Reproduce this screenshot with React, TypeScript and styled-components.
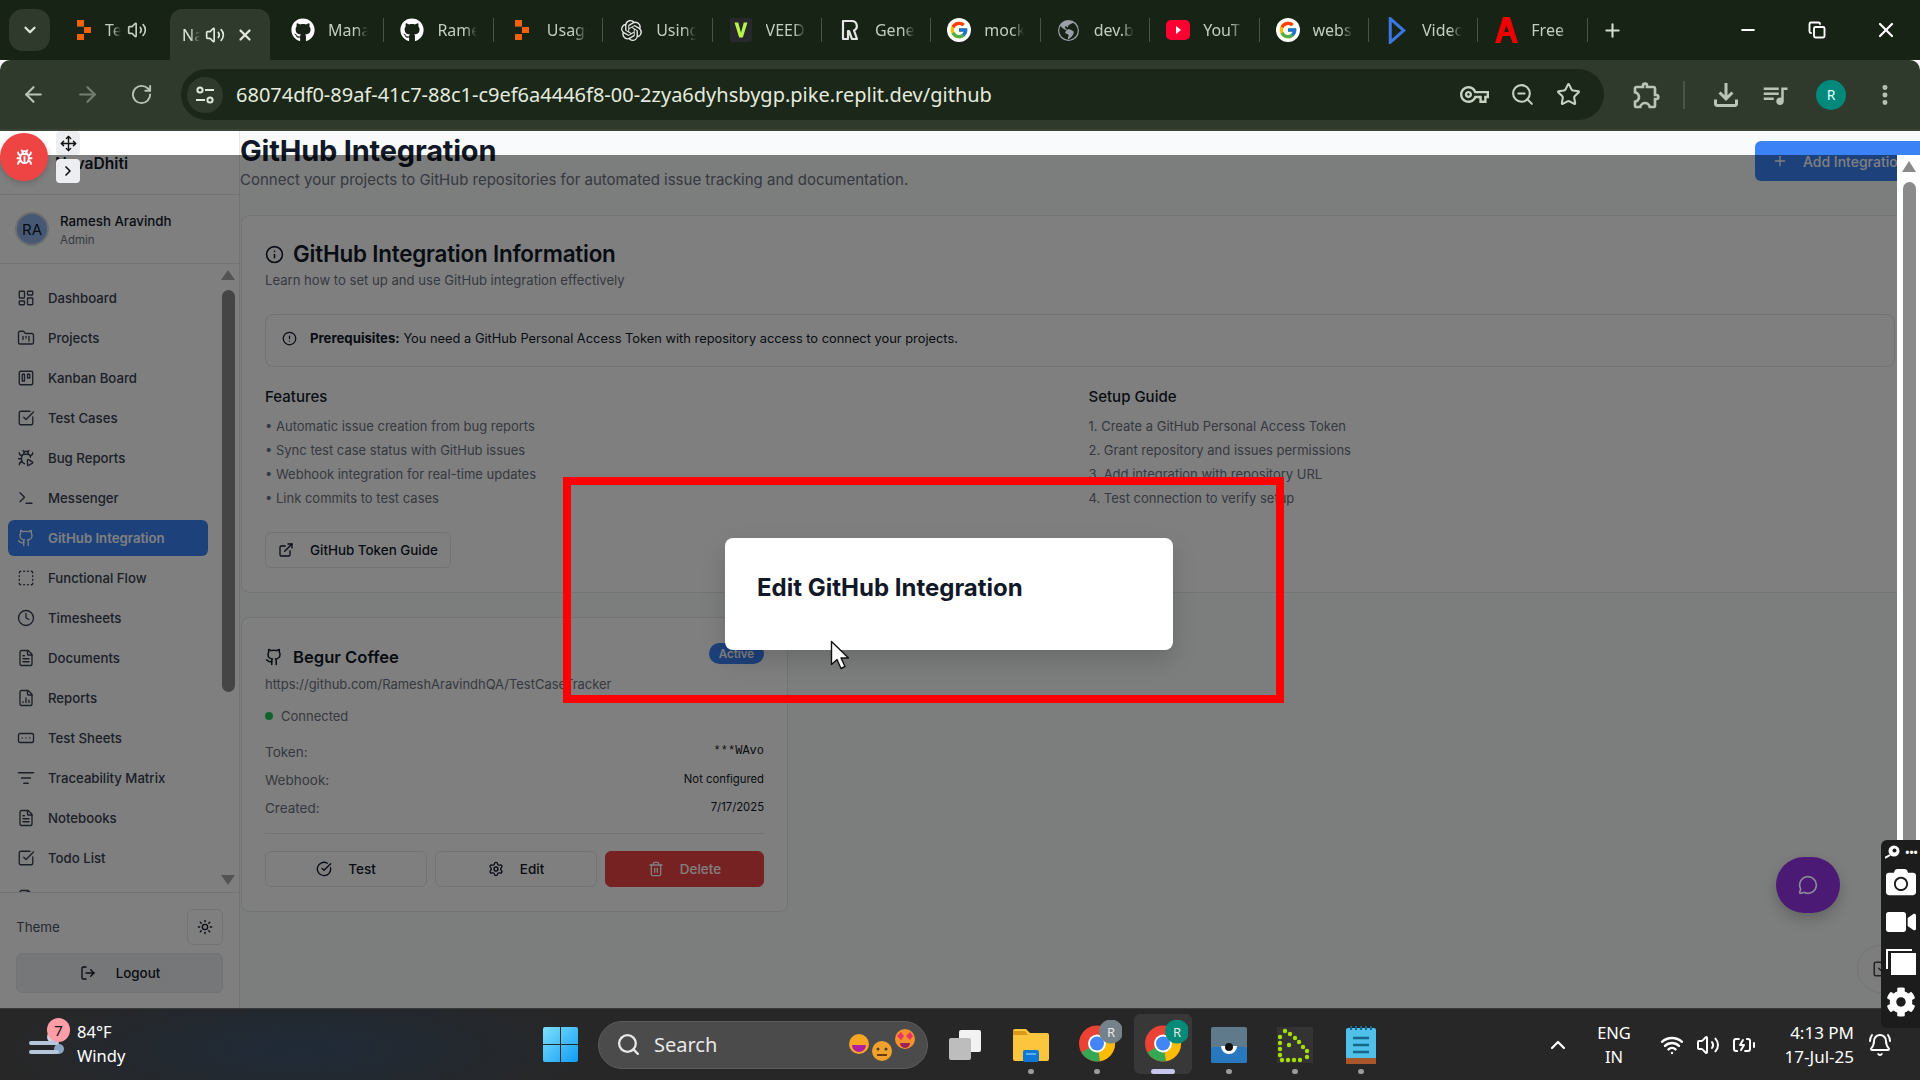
import React from "react";
import styled, { createGlobalStyle } from "styled-components";
import {
  ArrowLeft, ArrowRight, RotateCw, ZoomOut, Star, MoreVertical,
  Volume2, X, Plus, Minus, ChevronDown, ChevronRight, ChevronUp, LayoutDashboard, FolderKanban,
  Trello, SquareCheckBig, BugPlay, Terminal, Github, SquareDashed, Clock, FileText, FileChartColumn,
  RectangleEllipsis, ListFilter, Info, CircleAlert, ExternalLink, CircleCheckBig, Settings, Trash2,
  MessageCircle, Sun, LogOut, Move, Bug, Search, Wifi, BatteryCharging, BellRing, Copy,
} from "lucide-react";
import { FaGithub, FaCamera, FaVideo, FaCog } from "react-icons/fa";
import { FcGoogle } from "react-icons/fc";
import { SiOpenai } from "react-icons/si";
import { BsGlobeAmericas } from "react-icons/bs";
import { MdOutlineVpnKey, MdOutlineExtension, MdOutlineFileDownload, MdOutlineQueueMusic } from "react-icons/md";

const GlobalStyle = createGlobalStyle`
  html, body { margin: 0; padding: 0; background: #fff; }
  * { box-sizing: border-box; }
  #root { width: 1920px; height: 1080px; }
`;

const UI = `"Noto Sans", "Open Sans", sans-serif`;
const APP = `Inter, "Liberation Sans", sans-serif`;

const Screen = styled.div`
  position: relative; width: 1920px; height: 1080px; overflow: hidden;
  display: flex; flex-direction: column; font-family: ${APP};
`;

/* ---------- browser chrome ---------- */
const TabStrip = styled.div`
  height: 60px; background: #172315; display: flex; align-items: flex-start; padding-left: 9px; flex: none;
`;
const TabSearch = styled.div`
  width: 41px; height: 42px; margin-top: 9px; border-radius: 14px; background: #2f3a2d; color: #dfe6da;
  display: flex; align-items: center; justify-content: center; flex: none;
`;
const MutedTab = styled.div`
  width: 120px; height: 60px; padding-left: 27px; display: flex; align-items: center; flex: none; color: #c3cdbf;
  font: 400 16px ${UI};
`;
const ActiveTab = styled.div`
  width: 100px; height: 51px; margin-top: 9px; background: #2f3a2d; border-radius: 12px 12px 0 0;
  display: flex; align-items: center; padding: 0 0 0 12px; color: #e1e8dc; font: 400 16px ${UI}; flex: none;
  margin-right: 5px;
`;
const ShortLabel = styled.span<{ $w: number }>`
  width: ${p => p.$w}px; overflow: hidden; white-space: nowrap; flex: none;
  -webkit-mask-image: linear-gradient(90deg, #000 45%, transparent);
  mask-image: linear-gradient(90deg, #000 45%, transparent);
`;
const Tab = styled.div`
  width: 109.4px; height: 60px; display: flex; align-items: center; padding-left: 16px; position: relative; flex: none;
  color: #c3cdbf; font: 400 16px ${UI};
  &::after { content: ""; position: absolute; right: 0; top: 18px; width: 1px; height: 24px; background: #4a5548; }
`;
const TabIconSlot = styled.span`
  width: 24px; height: 24px; display: flex; align-items: center; justify-content: center; flex: none; margin-right: 13px;
`;
const TabLabel = styled.span`
  width: 40px; overflow: hidden; white-space: nowrap;
  -webkit-mask-image: linear-gradient(90deg, #000 70%, transparent);
  mask-image: linear-gradient(90deg, #000 70%, transparent);
`;
const NewTab = styled.div`
  width: 50px; height: 60px; display: flex; align-items: center; justify-content: center; color: #d5ddd0; flex: none;
`;
const WindowControls = styled.div`
  margin-left: auto; display: flex; height: 60px; color: #fff; flex: none;
`;
const WindowButton = styled.div`
  width: 69px; height: 60px; display: flex; align-items: center; justify-content: center;
`;
const Toolbar = styled.div`
  height: 71px; background: #2f3a2d; border-bottom: 2px solid #3b4639; border-radius: 10px 10px 0 0; display: flex;
  align-items: center; flex: none; padding-left: 0; color: #b9c5b4; position: relative;
`;
const NavIcon = styled.div<{ $dim?: boolean }>`
  width: 54px; height: 50px; display: flex; align-items: center; justify-content: center; flex: none;
  opacity: ${p => (p.$dim ? 0.5 : 1)};
`;
const NavCluster = styled.div`
  display: flex; width: 181px; padding-left: 6px; flex: none;
`;
const Omnibox = styled.div`
  width: 1423px; height: 51px; border-radius: 26px; background: #1b2718; display: flex; align-items: center;
  padding: 0 23px 0 6px; flex: none;
`;
const SiteInfo = styled.div`
  width: 36px; height: 36px; border-radius: 50%; background: #2f3a2d; display: flex; align-items: center;
  justify-content: center; color: #dfe6da; flex: none;
`;
const Url = styled.div`
  margin-left: 13px; font: 400 20px ${UI}; color: #e4ebdf; white-space: nowrap; flex: 1;
`;
const OmniIcons = styled.div`
  display: flex; gap: 21px; align-items: center; color: #c6d1c1; padding-right: 0;
`;
const ToolCluster = styled.div`
  display: flex; align-items: center; flex: 1; padding-left: 27px; position: relative;
`;
const ToolDivider = styled.div`
  width: 2px; height: 28px; background: #4a5548; margin: 0 23px 0 20px;
`;
const Avatar = styled.div`
  width: 30px; height: 30px; border-radius: 50%; background: #00897b; color: #dff; display: flex; align-items: center;
  justify-content: center; font: 400 14px ${UI}; margin-left: 26px;
`;

/* ---------- page ---------- */
const Page = styled.div`
  height: 877px; display: flex; position: relative; flex: none; overflow: hidden; background: #f9fafb;
`;
const Sidebar = styled.aside`
  width: 240px; flex: none; background: #fff; border-right: 1px solid #e5e7eb; display: flex; flex-direction: column;
`;
const Brand = styled.div`
  height: 64px; flex: none; border-bottom: 1px solid #e5e7eb; display: flex; align-items: flex-start; padding: 22px 0 0 17px;
  gap: 10px; font: 600 15.6px/22px ${APP}; color: #111827;
`;
const BrandMark = styled.div`
  width: 28px; height: 24px; margin-top: 2px; border-radius: 6px; color: #6b7280; flex: none; text-align: right;
  font: 400 9px/24px ${APP};
`;
const UserBlock = styled.div`
  height: 69px; flex: none; border-bottom: 1px solid #e5e7eb; display: flex; align-items: center; padding: 0 15px; gap: 11px;
`;
const UserAvatar = styled.div`
  width: 34px; height: 34px; border-radius: 50%; background: #8fb0ea; border: 2px solid #d5dae2; display: flex;
  align-items: center; justify-content: center; color: #111827; font: 400 15px ${APP}; flex: none;
`;
const UserText = styled.div`
  display: flex; flex-direction: column; gap: 2px; padding-top: 2px;
`;
const UserName = styled.div`
  font: 500 13.3px/18px ${APP}; color: #111827;
`;
const UserRole = styled.div`
  font: 400 11.5px/16px ${APP}; color: #6b7280;
`;
const NavArea = styled.div`
  flex: 1; display: flex; min-height: 0;
`;
const NavList = styled.nav`
  width: 221px; padding: 16px 13px 0 8px; display: flex; flex-direction: column; gap: 4px; overflow: hidden; flex: none;
`;
const NavItem = styled.div<{ $active?: boolean }>`
  height: 36px; flex: none; border-radius: 6px; display: flex; align-items: center; gap: 13px; padding-left: 9px;
  font: ${p => (p.$active ? 600 : 500)} 13.2px ${APP};
  background: ${p => (p.$active ? "#3b82f6" : "transparent")};
  color: ${p => (p.$active ? "#fff" : "#374151")};
`;
const Rail = styled.div`
  width: 14px; display: flex; flex-direction: column; align-items: center; padding-top: 6px; flex: none;
`;
const RailArrow = styled.div<{ $down?: boolean }>`
  width: 0; height: 0; border-left: 7px solid transparent; border-right: 7px solid transparent;
  ${p => (p.$down ? "border-top: 10px solid #a8a8a8;" : "border-bottom: 10px solid #a8a8a8;")}
`;
const RailThumb = styled.div`
  width: 13px; height: 402px; margin-top: 10px; border-radius: 7px; background: #8a8a8a;
`;
const RailSpacer = styled.div`
  flex: 1;
`;
const RailFoot = styled.span`
  height: 7px; flex: none;
`;
const SideFooter = styled.div`
  height: 116px; flex: none; border-top: 1px solid #e5e7eb; padding: 16px 16px 0;
`;
const ThemeRow = styled.div`
  height: 36px; display: flex; align-items: center; justify-content: space-between; font: 400 13.4px ${APP}; color: #4b5563;
`;
const ThemeButton = styled.div`
  width: 36px; height: 36px; border: 1px solid #e5e7eb; border-radius: 6px; display: flex; align-items: center;
  justify-content: center; color: #111827;
`;
const LogoutButton = styled.div`
  height: 40px; margin-top: 8px; border-radius: 6px; border: 1px solid #e5e7eb; background: #eceef1;
  display: flex; align-items: center; justify-content: center; gap: 20px; font: 500 13.4px ${APP}; color: #111827;
  padding-left: 1px;
`;
const Main = styled.main`
  flex: 1; min-width: 0; overflow: hidden; display: flex; flex-direction: column;
`;
const PageHead = styled.div`
  height: 84px; flex: none; display: flex; justify-content: space-between; align-items: flex-start;
`;
const PageTitle = styled.h1`
  margin: 2px 0 0; font: 700 29px/36px ${APP}; color: #111827; letter-spacing: -0.2px;
`;
const PageSub = styled.p`
  margin: -1px 0 0; font: 400 15px/24px ${APP}; color: #6b7280;
`;
const AddButton = styled.div`
  width: 165px; height: 40px; margin-top: 10px; border-radius: 6px 0 0 6px; background: #3b82f6; color: #fff; flex: none;
  display: flex; align-items: center; gap: 15px; padding-left: 17px; font: 500 14px ${APP}; white-space: nowrap; overflow: hidden;
`;
const InfoCard = styled.section`
  margin-left: 1px; height: 378px; flex: none; background: #fff; border: 1px solid #e5e7eb; border-radius: 8px;
  padding: 22px 24px 0 23px;
`;
const CardTitle = styled.h2`
  margin: 0; display: flex; align-items: center; gap: 9px; font: 600 22.4px/32px ${APP}; color: #111827; letter-spacing: -0.2px;
`;
const CardDesc = styled.p`
  margin: 0; font: 400 13.1px/20px ${APP}; color: #6b7280;
`;
const AlertBox = styled.div`
  margin-top: 24px; height: 53px; border: 1px solid #e5e7eb; border-radius: 8px; display: flex; align-items: flex-start;
  gap: 13px; padding: 13px 16px 0; font: 400 12.85px/20px ${APP}; color: #111827;
`;
const AlertIcon = styled.span`
  display: flex; margin-top: 3px; flex: none;
`;
const AlertStrong = styled.b`
  font-size: 13.2px;
`;
const Columns = styled.div`
  margin-top: 18px; display: grid; grid-template-columns: 1fr 1fr; gap: 17px;
`;
const ColumnTitle = styled.h3`
  margin: 0; font: 500 15px/24px ${APP}; color: #111827;
`;
const ColumnList = styled.ul`
  margin: 5px 0 0; padding: 0; list-style: none; font: 400 13px/24px ${APP}; color: #6b7280;
`;
const OutlineButton = styled.div`
  margin-top: 22px; width: 186px; height: 36px; border: 1px solid #e5e7eb; border-radius: 6px; display: flex; align-items: center;
  gap: 16px; padding-left: 12px; font: 500 13.4px ${APP}; color: #111827; background: #fff;
`;
const RepoCard = styled.section`
  margin: 24px 0 0 1px; width: 547px; height: 295px; flex: none; background: #fff; border: 1px solid #e5e7eb; border-radius: 8px;
  padding: 25px 23px 0;
`;
const RepoTop = styled.div`
  display: flex; justify-content: space-between; align-items: flex-start;
`;
const RepoTitle = styled.h3`
  margin: 0; display: flex; align-items: center; gap: 10px; font: 600 16.6px/28px ${APP}; color: #111827;
`;
const Badge = styled.span`
  width: 55px; height: 21px; border-radius: 11px; background: #3b82f6; color: #fff; display: flex;
  align-items: center; justify-content: center; font: 600 11.5px ${APP};
`;
const RepoUrl = styled.div`
  margin-top: 3px; font: 400 12.96px/20px ${APP}; color: #6b7280;
`;
const StatusRow = styled.div`
  margin-top: 12px; display: flex; align-items: center; gap: 8px; font: 400 13px/20px ${APP}; color: #6b7280;
`;
const StatusDot = styled.span`
  width: 8px; height: 8px; border-radius: 50%; background: #22c55e;
`;
const Meta = styled.dl`
  margin: 16px 0 0; display: flex; flex-direction: column; gap: 8px;
`;
const MetaRow = styled.div`
  display: flex; justify-content: space-between; height: 20px;
`;
const MetaKey = styled.dt`
  font: 400 13.5px/20px ${APP}; color: #6b7280;
`;
const MetaValue = styled.dd<{ $mono?: boolean }>`
  margin: 0; color: #111827; font: 400 ${p => (p.$mono ? "12px/18px 'Liberation Mono', monospace" : `11.3px/18px ${APP}`)};
`;
const RepoDivider = styled.div`
  height: 1px; background: #e5e7eb; margin-top: 15px;
`;
const RepoActions = styled.div`
  margin-top: 17px; display: grid; grid-template-columns: 162px 162px 159px; gap: 8px;
`;
const ActionButton = styled.div<{ $danger?: boolean }>`
  height: 36px; border-radius: 6px; display: flex; align-items: center; justify-content: center; gap: 16px;
  font: 500 13.5px ${APP}; border: 1px solid ${p => (p.$danger ? "#ef4444" : "#e5e7eb")};
  background: ${p => (p.$danger ? "#ef4444" : "#fff")};
  color: ${p => (p.$danger ? "#fff" : "#111827")};
`;

/* ---------- over content ---------- */
const Backdrop = styled.div`
  position: absolute; left: 0; right: 0; top: 24px; bottom: 0; background: rgba(0, 0, 0, 0.5);
`;
const PageTrack = styled.div`
  position: absolute; right: 0; top: 24px; bottom: 0; width: 23px; background: #fff; display: flex; flex-direction: column;
  align-items: center; padding: 6px 0 0 1px;
`;
const TrackArrow = styled.div`
  width: 0; height: 0; border-left: 7px solid transparent; border-right: 7px solid transparent; border-bottom: 11px solid #8a8a8a;
`;
const TrackThumb = styled.div`
  width: 13px; flex: 1; margin-top: 10px; border-radius: 7px 7px 0 0; background: #8a8a8a;
`;
const BugFab = styled.div`
  position: absolute; left: 0; top: 133px; width: 48px; height: 48px; border-radius: 50%; background: #ef4444; color: #fff;
  display: flex; align-items: center; justify-content: center; box-shadow: 0 2px 6px rgba(0,0,0,.2);
`;
const SmallFloat = styled.div<{ $top: number }>`
  position: absolute; left: 56px; top: ${p => p.$top}px; width: 24px; height: 24px; border-radius: 4px; background: #eceef2; color: #111;
  display: flex; align-items: center; justify-content: center;
`;
const ChatFab = styled.div`
  position: absolute; left: 1776px; top: 857px; width: 64px; height: 56px; border-radius: 28px; background: #4a1a75; color: #8f8a99;
  display: flex; align-items: center; justify-content: center; box-shadow: 0 6px 14px rgba(0,0,0,.2);
`;
const GhostFab = styled.div`
  position: absolute; left: 1857px; top: 945px; width: 48px; height: 48px; border-radius: 50%; background: #7d7d7d; border: 1px solid #757575;
  display: flex; align-items: center; padding-left: 14px; color: #222;
`;
const CaptureBar = styled.div`
  position: absolute; left: 1881px; top: 840px; width: 39px; height: 188px; border-radius: 6px 0 0 6px; background: #1c1c1c; color: #fff;
  display: flex; flex-direction: column; align-items: center; padding-top: 5px; gap: 10px;
`;
const CaptureTop = styled.div`
  display: flex; align-items: center; gap: 4px; height: 14px; padding-left: 2px; font: 700 11px/10px ${UI}; margin-bottom: -2px;
`;
const Modal = styled.div`
  position: absolute; left: 725px; top: 538px; width: 448px; height: 112px; background: #fff; border-radius: 8px;
  padding: 32px 32px 0; box-shadow: 0 10px 25px rgba(0,0,0,.15);
`;
const ModalTitle = styled.h2`
  margin: 0; font: 700 24px/36px ${APP}; color: #111827; white-space: nowrap;
`;
const Annotation = styled.div`
  position: absolute; left: 563px; top: 477px; width: 721px; height: 226px; border: 8px solid #f00;
`;
const Pointer = styled.svg`
  position: absolute; left: 830px; top: 640px;
`;

/* ---------- taskbar ---------- */
const Taskbar = styled.footer`
  height: 72px; flex: none; display: flex; align-items: center; position: relative; border-top: 1px solid #3a3a3a;
  background: radial-gradient(ellipse 300px 70px at 300px 40px, #1f2a38, transparent), #272727;
  color: #fff; font-family: ${UI};
`;
const Weather = styled.div`
  width: 543px; height: 100%; display: flex; align-items: center; padding-left: 29px; position: relative; flex: none;
`;
const WeatherBadge = styled.span`
  position: absolute; left: 47px; top: 9px; width: 23px; height: 24px; border-radius: 50%; background: #ff9ea6; color: #111;
  display: flex; align-items: center; justify-content: center; font: 400 15px ${UI};
`;
const WeatherText = styled.div`
  margin: -2px 0 0 12px; display: flex; flex-direction: column; gap: 2px; font: 400 16.5px/22px ${UI};
`;
const WindowsMark = styled.svg`
  flex: none;
`;
const SearchPill = styled.div`
  margin-left: 20px; width: 330px; height: 48px; border-radius: 24px; background: #4b4b4b; border: 1px solid #5c5c5c; display: flex; align-items: center;
  padding-left: 17px; gap: 13px; font: 400 20px ${UI}; color: #e8e8e8; flex: none; position: relative;
`;
const EmojiStack = styled.svg`
  position: absolute; right: 10px; top: 6px;
`;
const TaskSlots = styled.div`
  margin-left: 4px; display: flex; flex: none; height: 100%;
`;
const TaskSlot = styled.div<{ $active?: boolean }>`
  width: 66px; height: 100%; display: flex; align-items: center; justify-content: center; position: relative;
  &::before {
    content: ""; position: absolute; left: 4px; right: 4px; top: 5px; bottom: 6px; border-radius: 6px;
    background: ${p => (p.$active ? "#383838" : "transparent")};
  }
  & > svg { position: relative; }
`;
const RunDot = styled.span<{ $active?: boolean }>`
  position: absolute; bottom: 6px; left: 50%; transform: translateX(-50%); height: 5px; border-radius: 3px;
  width: ${p => (p.$active ? 24 : 6)}px; background: ${p => (p.$active ? "#c9c6ee" : "#9b9b9b")};
`;
const Tray = styled.div`
  flex: 1; display: flex; align-items: center; height: 100%; padding-left: 152px;
`;
const Lang = styled.div`
  width: 46px; margin-left: 21px; text-align: center; font: 400 16.5px/24px ${UI};
`;
const TrayIcons = styled.div`
  margin-left: 23px; display: flex; gap: 12px; align-items: center; width: 100px;
`;
const Clockline = styled.div`
  width: 94px; margin-left: 0; text-align: right; font: 400 17px/24px ${UI};
`;
const BellSlot = styled.div`
  margin-left: 14px; display: flex;
`;

const ReplitMark = () => (
  <svg width="14" height="20" viewBox="0 0 14 20"><path fill="#f26207" d="M0 0h7v6H0zM7 7h7v6H7zM0 14h7v6H0z" /><path fill="#ff8a3c" d="M0 6.5h7V7H0z" /></svg>
);
const YouTubeMark = () => (
  <svg width="24" height="20" viewBox="0 0 24 20"><rect width="24" height="20" rx="5" fill="#ff0033" /><path d="M10 6l5 4-5 4z" fill="#fff" /></svg>
);
const VideoMark = () => (
  <svg width="18" height="27" viewBox="0 0 20 32"><path d="M2 2l16 14L2 30z" fill="none" stroke="#3b76e1" strokeWidth="3.6" /></svg>
);
const VeedMark = () => (
  <svg width="24" height="24" viewBox="0 0 24 26"><rect width="24" height="26" rx="3" fill="#26282b" /><path d="M5 5h4l3 11 3-11h4l-5 16h-4z" fill="#b6f44a" /></svg>
);
const RMark = () => (
  <svg width="20" height="22" viewBox="0 0 20 22"><path d="M3 2h9a5 5 0 0 1 2 9.5L17 20h-5l-3-8H8v8H3z" fill="none" stroke="#e4e4e4" strokeWidth="2.2" strokeLinejoin="round" /></svg>
);
const AdobeMark = () => (
  <svg width="23" height="26" viewBox="0 0 23 26"><path fillRule="evenodd" fill="#ee0000" d="M8 0h7l8 26h-5.5l-2.2-7H7.7l-2.2 7H0zM11.5 8.5L9.2 15h4.6z" /></svg>
);
const TuneMark = () => (
  <svg width="20" height="20" viewBox="0 0 20 20" fill="none" stroke="currentColor" strokeWidth="2">
    <circle cx="5" cy="5" r="2.6" /><path d="M10 5h9" />
    <circle cx="15" cy="15" r="2.6" /><path d="M1 15h9" />
  </svg>
);
const GoogleMark = () => (
  <GoogleDisc><FcGoogle size={20} /></GoogleDisc>
);
const GoogleDisc = styled.span`
  width: 24px; height: 24px; border-radius: 12px; background: #fff; display: flex; align-items: center; justify-content: center;
`;
const InlineGap = styled.span<{ $w: number }>`
  width: ${p => p.$w}px; flex: none;
`;

const tabs: { label: string; icon: React.ReactNode }[] = [
  { label: "Manage", icon: <FaGithub size={24} color="#fff" /> },
  { label: "Ramesh", icon: <FaGithub size={24} color="#fff" /> },
  { label: "Usage", icon: <ReplitMark /> },
  { label: "Using", icon: <SiOpenai size={21} color="#e6e6e6" /> },
  { label: "VEED", icon: <VeedMark /> },
  { label: "Gene", icon: <RMark /> },
  { label: "mock", icon: <GoogleMark /> },
  { label: "dev.b", icon: <BsGlobeAmericas size={21} color="#9aa0a6" /> },
  { label: "YouT", icon: <YouTubeMark /> },
  { label: "webs", icon: <GoogleMark /> },
  { label: "Video", icon: <VideoMark /> },
  { label: "Free", icon: <AdobeMark /> },
];

const navItems: { label: string; Icon: React.ComponentType<any>; active?: boolean }[] = [
  { label: "Dashboard", Icon: LayoutDashboard },
  { label: "Projects", Icon: FolderKanban },
  { label: "Kanban Board", Icon: Trello },
  { label: "Test Cases", Icon: SquareCheckBig },
  { label: "Bug Reports", Icon: BugPlay },
  { label: "Messenger", Icon: Terminal },
  { label: "GitHub Integration", Icon: Github, active: true },
  { label: "Functional Flow", Icon: SquareDashed },
  { label: "Timesheets", Icon: Clock },
  { label: "Documents", Icon: FileText },
  { label: "Reports", Icon: FileChartColumn },
  { label: "Test Sheets", Icon: RectangleEllipsis },
  { label: "Traceability Matrix", Icon: ListFilter },
  { label: "Notebooks", Icon: FileText },
  { label: "Todo List", Icon: SquareCheckBig },
  { label: "Reminders", Icon: FileText },
];

const ChromeIcon = ({ badge, color }: { badge: string; color: string }) => (
  <svg width="50" height="50" viewBox="0 0 50 50">
    <g transform="translate(4 -3.5)">
      <circle cx="21" cy="27" r="18" fill="#ea4335" />
      <path d="M21 27 L5.4 36 A18 18 0 0 0 24 44.7Z" fill="#34a853" />
      <path d="M21 27 L24 44.7 A18 18 0 0 0 37 18.5 L21 18.5Z" fill="#fbbc05" />
      <circle cx="21" cy="27" r="9" fill="#fff" />
      <circle cx="21" cy="27" r="7" fill="#4285f4" />
      <circle cx="35" cy="15" r="12" fill={color} />
      <text x="35" y="20" textAnchor="middle" fontSize="13" fill="#e8e8e8" fontFamily="Noto Sans">{badge}</text>
    </g>
  </svg>
);

const App = () => (
  <Screen>
    <GlobalStyle />
    <TabStrip>
      <TabSearch><ChevronDown size={18} strokeWidth={3} /></TabSearch>
      <MutedTab>
        <ReplitMark />
        <InlineGap $w={14} />
        <ShortLabel $w={16}>Te</ShortLabel>
        <InlineGap $w={6} />
        <Volume2 size={20} />
      </MutedTab>
      <ActiveTab>
        <ShortLabel $w={18}>Na</ShortLabel>
        <InlineGap $w={5} />
        <Volume2 size={20} />
        <InlineGap $w={11} />
        <X size={18} strokeWidth={3} />
      </ActiveTab>
      {tabs.map(t => (
        <Tab key={t.label}>
          <TabIconSlot>{t.icon}</TabIconSlot>
          <TabLabel>{t.label}</TabLabel>
        </Tab>
      ))}
      <NewTab><Plus size={21} strokeWidth={2.4} /></NewTab>
      <WindowControls>
        <WindowButton><Minus size={20} strokeWidth={2.5} /></WindowButton>
        <WindowButton><Copy size={18} strokeWidth={2.5} /></WindowButton>
        <WindowButton><X size={24} strokeWidth={2.2} /></WindowButton>
      </WindowControls>
    </TabStrip>
    <Toolbar>
      <NavCluster>
        <NavIcon><ArrowLeft size={25} /></NavIcon>
        <NavIcon $dim><ArrowRight size={25} /></NavIcon>
        <NavIcon><RotateCw size={23} /></NavIcon>
      </NavCluster>
      <Omnibox>
        <SiteInfo><TuneMark /></SiteInfo>
        <Url>68074df0-89af-41c7-88c1-c9ef6a4446f8-00-2zya6dyhsbygp.pike.replit.dev/github</Url>
        <OmniIcons>
          <MdOutlineVpnKey size={29} />
          <ZoomOut size={25} />
          <Star size={25} />
        </OmniIcons>
      </Omnibox>
      <ToolCluster>
        <MdOutlineExtension size={32} />
        <ToolDivider />
        <MdOutlineFileDownload size={36} />
        <InlineGap $w={16} />
        <MdOutlineQueueMusic size={30} />
        <Avatar>R</Avatar>
        <InlineGap $w={26} />
        <MoreVertical size={26} strokeWidth={2.6} />
      </ToolCluster>
    </Toolbar>
    <Page>
      <Sidebar>
        <Brand><BrandMark>iti</BrandMark><span>NavaDhiti</span></Brand>
        <UserBlock>
          <UserAvatar>RA</UserAvatar>
          <UserText>
            <UserName>Ramesh Aravindh</UserName>
            <UserRole>Admin</UserRole>
          </UserText>
        </UserBlock>
        <NavArea>
          <NavList>
            {navItems.map(({ label, Icon, active }) => (
              <NavItem key={label} $active={active}>
                <Icon size={18} strokeWidth={1.8} />
                {label}
              </NavItem>
            ))}
          </NavList>
          <Rail>
            <RailArrow />
            <RailThumb />
            <RailSpacer />
            <RailArrow $down />
            <RailFoot />
          </Rail>
        </NavArea>
        <SideFooter>
          <ThemeRow>Theme<ThemeButton><Sun size={16} /></ThemeButton></ThemeRow>
          <LogoutButton><LogOut size={16} />Logout</LogoutButton>
        </SideFooter>
      </Sidebar>
      <Main>
        <PageHead>
          <div>
            <PageTitle>GitHub Integration</PageTitle>
            <PageSub>Connect your projects to GitHub repositories for automated issue tracking and documentation.</PageSub>
          </div>
          <AddButton><Plus size={16} />Add Integration</AddButton>
        </PageHead>
        <InfoCard>
          <CardTitle><Info size={19} />GitHub Integration Information</CardTitle>
          <CardDesc>Learn how to set up and use GitHub integration effectively</CardDesc>
          <AlertBox>
            <AlertIcon><CircleAlert size={15} /></AlertIcon>
            <span><AlertStrong>Prerequisites:</AlertStrong> You need a GitHub Personal Access Token with repository access to connect your projects.</span>
          </AlertBox>
          <Columns>
            <div>
              <ColumnTitle>Features</ColumnTitle>
              <ColumnList>
                <li>• Automatic issue creation from bug reports</li>
                <li>• Sync test case status with GitHub issues</li>
                <li>• Webhook integration for real-time updates</li>
                <li>• Link commits to test cases</li>
              </ColumnList>
            </div>
            <div>
              <ColumnTitle>Setup Guide</ColumnTitle>
              <ColumnList>
                <li>1. Create a GitHub Personal Access Token</li>
                <li>2. Grant repository and issues permissions</li>
                <li>3. Add integration with repository URL</li>
                <li>4. Test connection to verify setup</li>
              </ColumnList>
            </div>
          </Columns>
          <OutlineButton><ExternalLink size={16} />GitHub Token Guide</OutlineButton>
        </InfoCard>
        <RepoCard>
          <RepoTop>
            <RepoTitle><Github size={18} />Begur Coffee</RepoTitle>
            <Badge>Active</Badge>
          </RepoTop>
          <RepoUrl>https://github.com/RameshAravindhQA/TestCaseTracker</RepoUrl>
          <StatusRow><StatusDot />Connected</StatusRow>
          <Meta>
            <MetaRow><MetaKey>Token:</MetaKey><MetaValue $mono>***WAvo</MetaValue></MetaRow>
            <MetaRow><MetaKey>Webhook:</MetaKey><MetaValue>Not configured</MetaValue></MetaRow>
            <MetaRow><MetaKey>Created:</MetaKey><MetaValue>7/17/2025</MetaValue></MetaRow>
          </Meta>
          <RepoDivider />
          <RepoActions>
            <ActionButton><CircleCheckBig size={16} />Test</ActionButton>
            <ActionButton><Settings size={16} />Edit</ActionButton>
            <ActionButton $danger><Trash2 size={16} />Delete</ActionButton>
          </RepoActions>
        </RepoCard>
      </Main>
      <Backdrop />
      <PageTrack><TrackArrow /><TrackThumb /></PageTrack>
    </Page>
    <Taskbar>
      <Weather>
        <svg width="36" height="36" viewBox="0 0 36 36">
          <circle cx="24" cy="10" r="6" fill="#c7d4e6" />
          <circle cx="30" cy="22" r="5" fill="#8aa4c4" />
          <path d="M2 16h26M2 25h26" stroke="#b6c7dc" strokeWidth="4" strokeLinecap="round" />
        </svg>
        <WeatherBadge>7</WeatherBadge>
        <WeatherText><span>84°F</span><span>Windy</span></WeatherText>
      </Weather>
      <WindowsMark width="35" height="35" viewBox="0 0 35 35">
        <defs><linearGradient id="win" x1="0" y1="0" x2="1" y2="1"><stop offset="0" stopColor="#7fe0fb" /><stop offset="1" stopColor="#0f9bf5" /></linearGradient></defs>
        <path fill="url(#win)" d="M0 2a2 2 0 0 1 2-2h15v17H0zM18 0h15a2 2 0 0 1 2 2v15H18zM0 18h17v17H2a2 2 0 0 1-2-2zM18 18h17v15a2 2 0 0 1-2 2H18z" />
      </WindowsMark>
      <SearchPill>
        <Search size={25} strokeWidth={2.2} />
        Search
        <EmojiStack width="68" height="36" viewBox="0 0 68 36">
          <circle cx="10" cy="16" r="10" fill="#f6a623" /><path d="M3 17h14a7 7 0 0 1-14 0z" fill="#b01fa0" />
          <circle cx="33" cy="23" r="10" fill="#f2a12c" /><path d="M28 27h10" stroke="#6b3b10" strokeWidth="2" /><circle cx="29" cy="21" r="1.5" fill="#442" /><circle cx="37" cy="21" r="1.5" fill="#442" />
          <circle cx="56" cy="11" r="10" fill="#f2932c" /><path d="M48 8l4-4 3 4-3 4zM57 8l4-4 3 4-3 4z" fill="#e8336b" /><path d="M51 15h10a5 5 0 0 1-10 0z" fill="#a0205a" />
        </EmojiStack>
      </SearchPill>
      <TaskSlots>
        <TaskSlot>
          <svg width="36" height="32" viewBox="0 0 36 32"><rect x="12" y="1" width="22" height="22" rx="2" fill="#f2f2f2" /><rect x="2" y="9" width="22" height="22" rx="2" fill="#bdbdbd" /></svg>
        </TaskSlot>
        <TaskSlot>
          <svg width="38" height="34" viewBox="0 0 38 34"><path d="M1 3a2 2 0 0 1 2-2h11l4 4h17a2 2 0 0 1 2 2v24a2 2 0 0 1-2 2H3a2 2 0 0 1-2-2z" fill="#fbc53d" /><path d="M1 3h12l3 4H1z" fill="#d99a1c" /><rect x="11" y="22" width="16" height="12" rx="2" fill="#0f78d4" /><rect x="14" y="25" width="10" height="2" fill="#5ab0f0" /></svg>
          <RunDot />
        </TaskSlot>
        <TaskSlot><ChromeIcon badge="R" color="#76828a" /><RunDot /></TaskSlot>
        <TaskSlot $active><ChromeIcon badge="R" color="#008a78" /><RunDot $active /></TaskSlot>
        <TaskSlot>
          <svg width="36" height="36" viewBox="0 0 36 36"><rect width="36" height="36" rx="2" fill="#5e7a8b" /><rect y="20" width="36" height="16" rx="2" fill="#2878c0" /><path d="M10 19h16a8 8 0 0 1-16 0z" fill="#fff" /><circle cx="18" cy="20" r="4" fill="#111" /></svg>
          <RunDot />
        </TaskSlot>
        <TaskSlot>
          <svg width="36" height="36" viewBox="0 0 36 36"><rect width="36" height="36" fill="#333" /><g fill="#a6e000">{[[3,10],[3,16],[3,22],[3,28],[5,33],[11,33],[17,33],[23,33],[8,4],[13,7],[18,11],[22,15],[26,20],[30,24],[30,30],[12,18]].map(([x,y],i)=><circle key={i} cx={x} cy={y} r="2.2"/>)}</g></svg>
          <RunDot />
        </TaskSlot>
        <TaskSlot>
          <svg width="30" height="38" viewBox="0 0 30 38"><rect y="2" width="30" height="36" rx="2" fill="#4fc1e9" /><rect y="32" width="30" height="6" fill="#a8562a" /><path d="M7 12h16M7 19h16M7 26h16" stroke="#17658c" strokeWidth="2.4" /><path d="M5 0v4M10 0v4M15 0v4M20 0v4M25 0v4" stroke="#17658c" strokeWidth="2" /></svg>
          <RunDot />
        </TaskSlot>
      </TaskSlots>
      <Tray>
        <ChevronUp size={24} strokeWidth={2.2} />
        <Lang>ENG<br />IN</Lang>
        <TrayIcons>
          <Wifi size={24} strokeWidth={2.4} />
          <Volume2 size={24} />
          <BatteryCharging size={24} />
        </TrayIcons>
        <Clockline>4:13 PM<br />17-Jul-25</Clockline>
        <BellSlot><BellRing size={24} /></BellSlot>
      </Tray>
    </Taskbar>
    <BugFab><Bug size={17} strokeWidth={2.6} /></BugFab>
    <SmallFloat $top={131}><Move size={17} /></SmallFloat>
    <SmallFloat $top={159}><ChevronRight size={16} strokeWidth={2.5} /></SmallFloat>
    <Modal><ModalTitle>Edit GitHub Integration</ModalTitle></Modal>
    <Annotation />
    <Pointer width="20" height="30" viewBox="0 0 20 30">
      <path d="M1.5 1.5v23l5.5-5 4 9 4-2-4-8.5h7.5z" fill="#fff" stroke="#111" strokeWidth="1.4" strokeLinejoin="round" />
    </Pointer>
    <ChatFab><MessageCircle size={20} /></ChatFab>
    <GhostFab><SquareCheckBig size={18} /></GhostFab>
    <CaptureBar>
      <CaptureTop>
        <svg width="16" height="14" viewBox="0 0 16 14"><circle cx="9" cy="6" r="5.5" fill="#fff" /><circle cx="9.5" cy="5.5" r="2" fill="#1c1c1c" /><path d="M0 13l5-3" stroke="#fff" strokeWidth="2" /></svg>
        <span>•••</span>
      </CaptureTop>
      <FaCamera size={30} />
      <FaVideo size={30} />
      <svg width="30" height="30" viewBox="0 0 30 30"><path d="M0 2h26v2H2v18H0z" fill="#fff" /><rect x="5" y="6" width="25" height="22" fill="#fff" /></svg>
      <FaCog size={30} />
    </CaptureBar>
  </Screen>
);

export default App;
